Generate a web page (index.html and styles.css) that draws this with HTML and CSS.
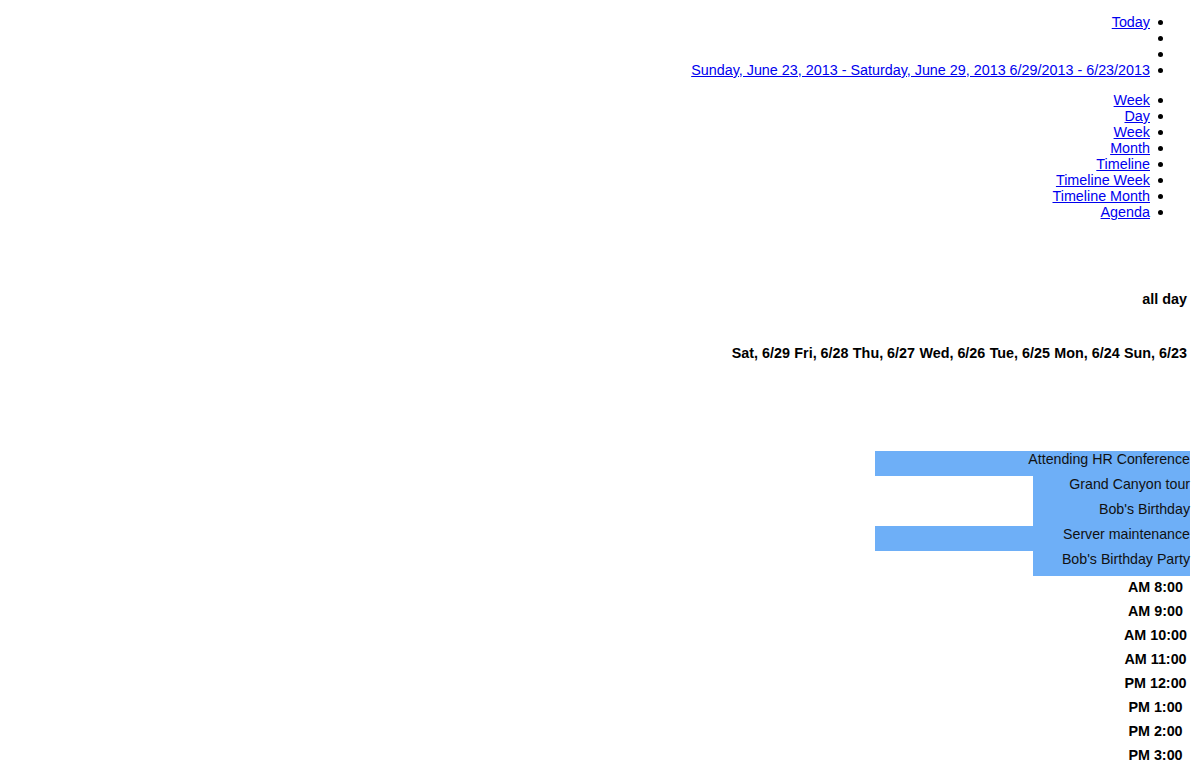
FILE: index.html
```html
<!DOCTYPE html>
<html dir="rtl" lang="en">
<head>
<meta charset="utf-8">
<title>Scheduler</title>
<link rel="stylesheet" href="styles.css">
</head>
<body>
<div class="scheduler">
  <ul class="nav">
    <li><a href="#">Today</a></li>
    <li></li>
    <li></li>
    <li><a href="#">Sunday, June 23, 2013 - Saturday, June 29, 2013 6/29/2013 - 6/23/2013</a></li>
  </ul>
  <ul class="nav views">
    <li><a href="#">Week</a></li>
    <li><a href="#">Day</a></li>
    <li><a href="#">Week</a></li>
    <li><a href="#">Month</a></li>
    <li><a href="#">Timeline</a></li>
    <li><a href="#">Timeline Week</a></li>
    <li><a href="#">Timeline Month</a></li>
    <li><a href="#">Agenda</a></li>
  </ul>
  <div class="allday">all day</div>
  <div class="days">
    <span>Sun, 6/23</span>
    <span>Mon, 6/24</span>
    <span>Tue, 6/25</span>
    <span>Wed, 6/26</span>
    <span>Thu, 6/27</span>
    <span>Fri, 6/28</span>
    <span>Sat, 6/29</span>
  </div>
  <div class="events">
    <div class="event wide">Attending HR Conference</div>
    <div class="event">Grand Canyon tour</div>
    <div class="event">Bob's Birthday</div>
    <div class="event wide">Server maintenance</div>
    <div class="event">Bob's Birthday Party</div>
  </div>
  <div class="times">
    <div class="time">AM 8:00</div>
    <div class="time">AM 9:00</div>
    <div class="time">AM 10:00</div>
    <div class="time">AM 11:00</div>
    <div class="time">PM 12:00</div>
    <div class="time">PM 1:00</div>
    <div class="time">PM 2:00</div>
    <div class="time">PM 3:00</div>
  </div>
</div>
</body>
</html>
```
FILE: styles.css
```css
html, body {
  margin: 0;
  padding: 0;
  background: #ffffff;
  overflow: hidden;
}

body {
  font-family: "Liberation Sans", Arial, sans-serif;
  font-size: 14.35px;
  line-height: 16px;
  color: #000000;
}

.scheduler {
  display: flex;
  flex-direction: column;
  height: 768px;
}

.nav {
  margin: 14px 0 0 0;
  padding: 0 37px 0 0;
  list-style: none;
}

.nav li {
  display: flex;
  align-items: center;
  height: 16px;
}

.nav li::before {
  content: "";
  width: 5px;
  height: 5px;
  border-radius: 50%;
  background: #000000;
  margin-left: 8px;
}

.nav a {
  color: #0000ee;
  text-decoration: underline;
}

.views {
  margin-top: 14px;
}

.allday {
  margin-top: 71px;
  padding-right: 13px;
  font-weight: bold;
}

.days {
  margin-top: 38px;
  padding-right: 13px;
  display: flex;
  gap: 4.35px;
  font-weight: bold;
}

.events {
  margin-top: 90px;
  display: flex;
  flex-direction: column;
  align-items: flex-start;
  padding-right: 10px;
}

.event {
  width: 157px;
  height: 25px;
  background: #6eaff7;
  color: #111111;
  text-align: right;
  font-size: 14.2px;
}

.event.wide {
  width: 315px;
}

.times {
  display: flex;
  flex-direction: column;
  align-items: flex-start;
  padding-right: 12px;
}

.time {
  width: 65px;
  height: 24px;
  padding-top: 3px;
  box-sizing: border-box;
  text-align: center;
  font-weight: bold;
}
```
